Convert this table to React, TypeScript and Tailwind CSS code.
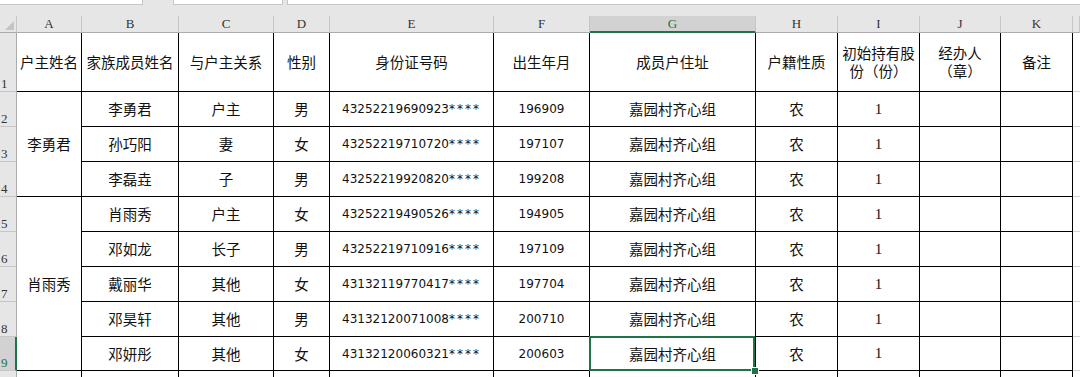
import React from "react";

const members = [
    ["李勇君", "户主", "男", "43252219690923", "196909"],
    ["孙巧阳", "妻", "女", "43252219710720", "197107"],
    ["李磊垚", "子", "男", "43252219920820", "199208"],
    ["肖雨秀", "户主", "女", "43252219490526", "194905"],
    ["邓如龙", "长子", "男", "43252219710916", "197109"],
    ["戴丽华", "其他", "女", "43132119770417", "197704"],
    ["邓昊轩", "其他", "男", "43132120071008", "200710"],
    ["邓妍彤", "其他", "女", "43132120060321", "200603"],
];

const letters = ["A", "B", "C", "D", "E", "F", "G", "H", "I", "J", "K", ""];

const cell = "border-r border-b border-black flex items-center justify-center text-center";
const head = "border-r border-b border-r-[#c6c6c6] border-b-[#ababab] bg-[#e6e6e6] flex items-center justify-center font-['Liberation_Serif',serif] text-[13px] text-[#333]";
const rowHead = "border-r border-b border-r-[#ababab] border-b-[#c6c6c6] bg-[#e6e6e6] flex items-end pl-px font-['Liberation_Serif',serif] text-[13px] leading-[14px] text-[#333]";
const numText = "font-['DejaVu_Sans',sans-serif] text-[12px]";

function App() {
    return (
        <div className="h-[377px] w-[1080px] overflow-hidden bg-white font-['Noto_Sans_CJK_SC',sans-serif] text-[14.5px] text-[#111]">
            {/* sheet tabs strip */}
            <div className="flex h-[16px] gap-[4px] bg-[#e6e6e6]">
                <div className="h-[5px] w-[143px] border-r border-b border-[#c6c6c6] bg-white"></div>
                <div className="ml-[26px] h-[5px] w-[110px] border-x border-b border-[#c6c6c6] bg-white"></div>
                <div className="h-[5px] flex-1 border-l border-b border-[#c6c6c6] bg-white"></div>
            </div>

            <div className="grid grid-cols-[17px_65px_97px_95px_56px_164px_96px_166px_82px_82px_81px_72px_1fr] grid-rows-[17px_59px_35px_35px_35px_35px_35px_35px_35px_34px_35px]">
                {/* column header */}
                <div className="relative border-r border-b border-r-[#c6c6c6] border-b-[#ababab] bg-[#e6e6e6]">
                    <div className="absolute right-[2px] bottom-[2px] h-0 w-0 border-l-[9px] border-t-[9px] border-l-transparent border-t-transparent border-r-0 border-b-[9px] border-b-[#c4c4c4]"></div>
                </div>
                {letters.map((l, i) =>
                    l === "G" ? (
                        <div key={i} className="flex items-center justify-center border-r border-b-2 border-r-[#c6c6c6] border-b-[#217346] bg-[#d2d2d2] font-['Liberation_Serif',serif] text-[13px] text-[#217346]">
                            {l}
                        </div>
                    ) : (
                        <div key={i} className={head}>{l}</div>
                    )
                )}

                {/* row 1 : titles */}
                <div className={rowHead}>1</div>
                <div className={cell}>户主姓名</div>
                <div className={cell}>家族成员姓名</div>
                <div className={cell}>与户主关系</div>
                <div className={cell}>性别</div>
                <div className={cell}>身份证号码</div>
                <div className={cell}>出生年月</div>
                <div className={cell}>成员户住址</div>
                <div className={cell}>户籍性质</div>
                <div className={`${cell} flex-col leading-[18px]`}>
                    <span>初始持有股</span>
                    <span>份（份）</span>
                </div>
                <div className={`${cell} flex-col leading-[18px]`}>
                    <span>经办人</span>
                    <span>（章）</span>
                </div>
                <div className={cell}>备注</div>
                <div className="border-b border-[#d4d4d4]"></div>

                {members.map((m, i) => {
                    const rowNo = i + 2;
                    const last = rowNo === 9;
                    return (
                        <React.Fragment key={i}>
                            {last ? (
                                <div className="flex items-end border-r-2 border-b border-r-[#217346] border-b-[#c6c6c6] bg-[#d2d2d2] pl-px font-['Liberation_Serif',serif] text-[13px] leading-[14px] text-[#217346]">
                                    {rowNo}
                                </div>
                            ) : (
                                <div className={rowHead}>{rowNo}</div>
                            )}
                            {i === 0 && <div className={`${cell} row-span-3`}>李勇君</div>}
                            {i === 3 && <div className={`${cell} row-span-5`}>肖雨秀</div>}
                            <div className={cell}>{m[0]}</div>
                            <div className={cell}>{m[1]}</div>
                            <div className={cell}>{m[2]}</div>
                            <div className={`${cell} ${numText}`}>
                                {m[3]}
                                <span className="tracking-[2px]">****</span>
                            </div>
                            <div className={`${cell} ${numText}`}>{m[4]}</div>
                            {last ? (
                                <div className={`${cell} relative`}>
                                    嘉园村齐心组
                                    <div className="absolute -top-px -left-px right-0 -bottom-px border-2 border-[#217346]"></div>
                                    <div className="absolute -right-[3px] -bottom-[4px] h-[6px] w-[6px] bg-[#217346] outline outline-1 outline-white"></div>
                                </div>
                            ) : (
                                <div className={cell}>嘉园村齐心组</div>
                            )}
                            <div className={cell}>农</div>
                            <div className={`${cell} font-['Liberation_Serif',serif] text-[15px]`}>1</div>
                            <div className={cell}></div>
                            <div className={cell}></div>
                            <div className="border-b border-[#d4d4d4]"></div>
                        </React.Fragment>
                    );
                })}

                {/* row 10, only its top edge shows */}
                <div className="border-r border-r-[#ababab] bg-[#e6e6e6]"></div>
                {letters.map((_, i) => (
                    <div key={i} className={i === 11 ? "" : "border-r border-black"}></div>
                ))}
            </div>
        </div>
    );
}

export default App;
